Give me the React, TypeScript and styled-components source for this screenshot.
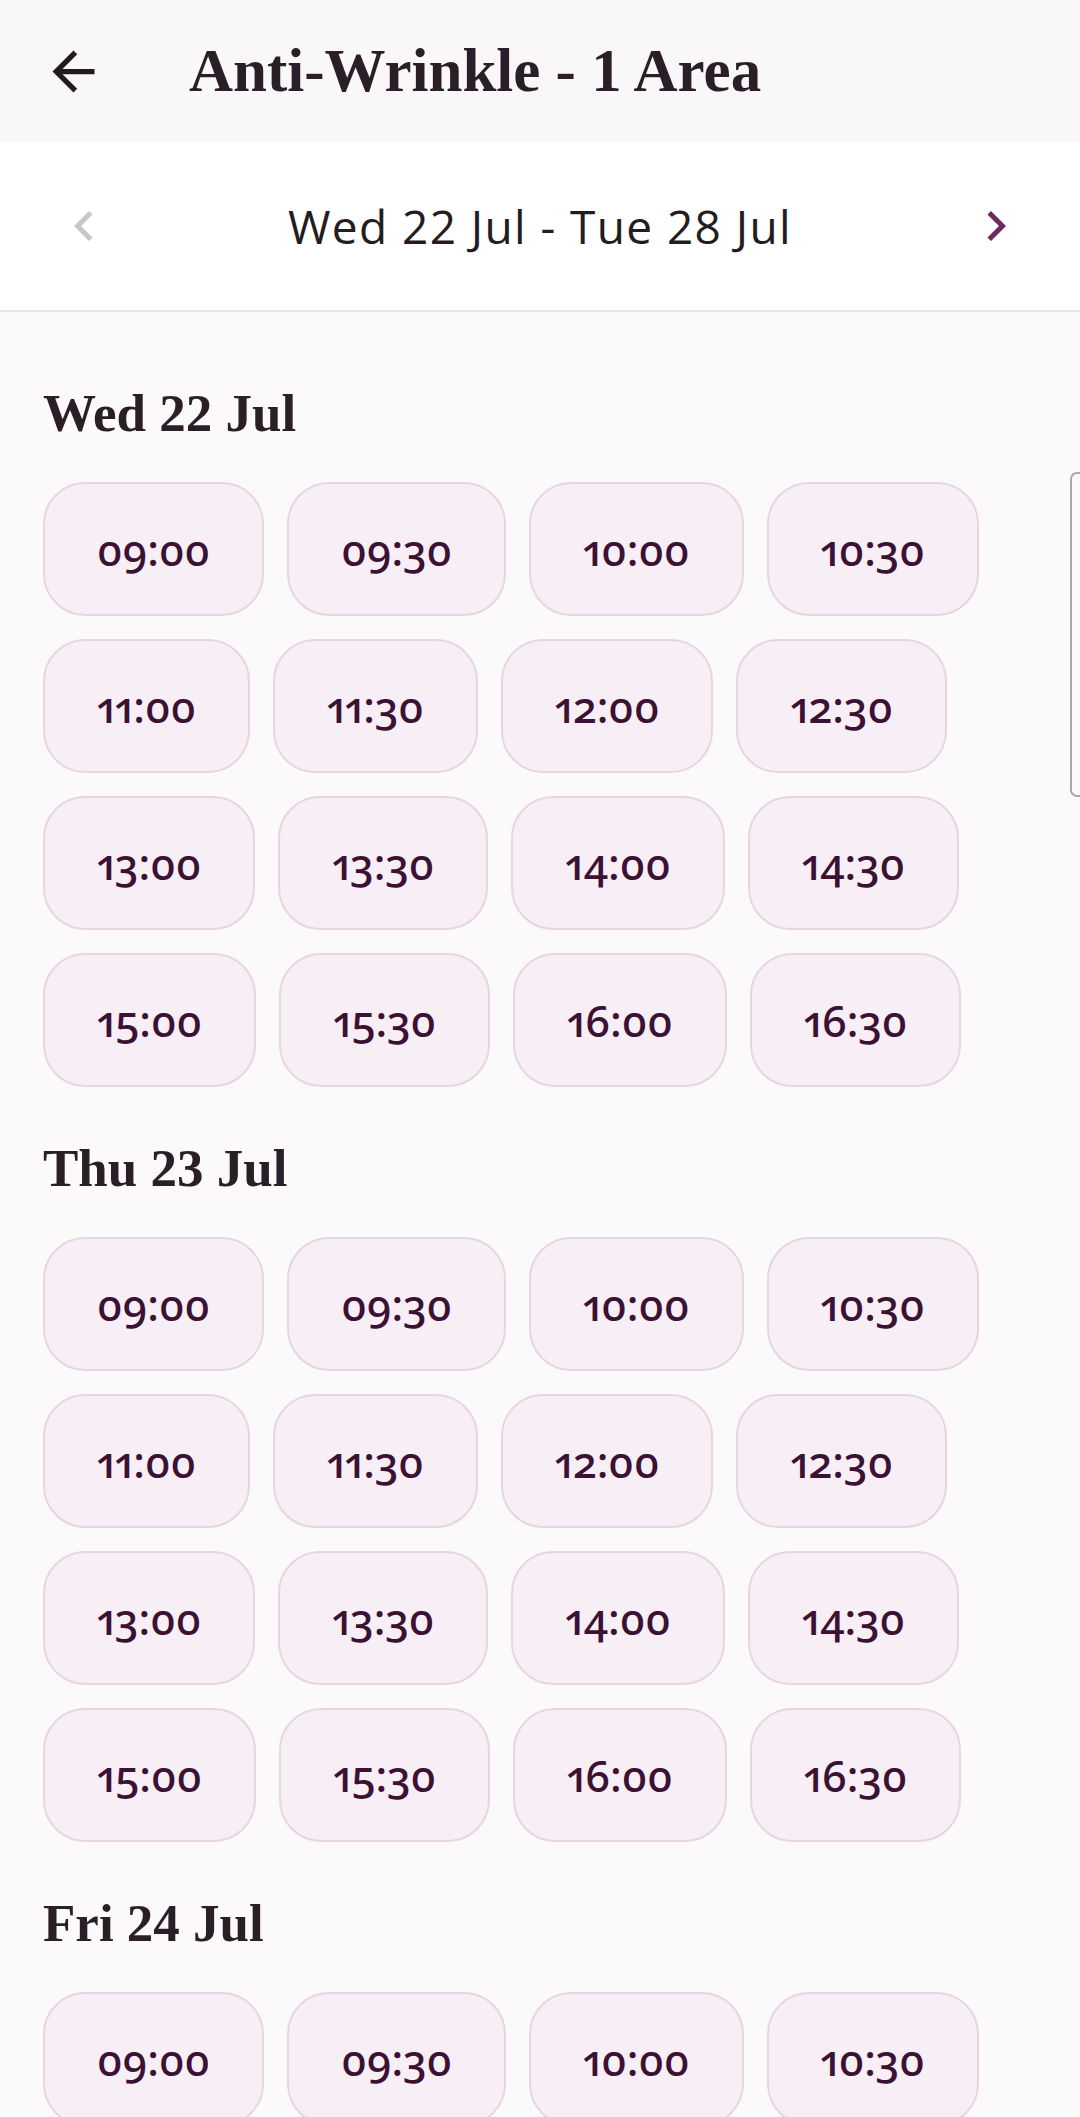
import React from "react";
import styled, { createGlobalStyle } from "styled-components";

const GlobalStyle = createGlobalStyle`
  html, body { margin: 0; padding: 0; background: #fcf9fb; }
  #root { width: 1080px; }
  * { box-sizing: border-box; }
`;

const Page = styled.div`
  position: relative;
  width: 1080px;
  height: 2117px;
  background: #fcf9fb;
  overflow: hidden;
`;

const Header = styled.header`
  height: 142px;
  background: #faf7f9;
  display: flex;
  align-items: center;
`;

const BackButton = styled.button`
  width: 63px;
  height: 63px;
  margin-left: 42px;
  padding: 0;
  border: none;
  background: transparent;
  display: flex;
  align-items: center;
  justify-content: center;
  color: #231a20;
`;

const Title = styled.h1`
  margin: 0 0 0 84px;
  font-family: "Liberation Serif", serif;
  font-weight: 700;
  font-size: 61px;
  color: #2a1f26;
`;

const WeekNav = styled.nav`
  height: 170px;
  background: #ffffff;
  border-bottom: 2px solid #e9e4e7;
  display: flex;
  align-items: center;
  justify-content: space-between;
  padding: 0 54px;
`;

const NavArrow = styled.button<{ $active?: boolean }>`
  width: 60px;
  height: 60px;
  padding: 0;
  border: none;
  background: transparent;
  display: flex;
  align-items: center;
  justify-content: center;
  color: ${(p) => (p.$active ? "#6b2a5e" : "#c9c6c8")};
`;

const WeekLabel = styled.div`
  font-family: "Open Sans", sans-serif;
  font-weight: 500;
  font-size: 46px;
  letter-spacing: 1.4px;
  color: #241c21;
`;

const Content = styled.main`
  padding: 69px 43px 0;
`;

const Section = styled.section`
  margin-bottom: 49px;
`;

const DayHeading = styled.h2`
  margin: 0 0 36px;
  font-family: "Liberation Serif", serif;
  font-weight: 700;
  font-size: 53px;
  line-height: 65px;
  color: #2a1f26;
`;

const SlotGrid = styled.div`
  display: flex;
  flex-wrap: wrap;
  gap: 23px;
`;

const Slot = styled.button`
  height: 134px;
  padding: 0 52px;
  border: 2px solid #e6d6e1;
  border-radius: 42px;
  background: #f8eff6;
  color: #3b1233;
  font-family: "Noto Sans", sans-serif;
  font-weight: 500;
  font-size: 43px;
  font-feature-settings: "onum" 1, "pnum" 1;
  font-variant-numeric: oldstyle-nums proportional-nums;
`;

const ScrollThumb = styled.div`
  position: absolute;
  top: 472px;
  right: 0;
  width: 10px;
  height: 325px;
  border: 2px solid #a9a9a9;
  border-right: none;
  border-radius: 7px 0 0 7px;
`;

const times = [
  "09:00", "09:30", "10:00", "10:30",
  "11:00", "11:30", "12:00", "12:30",
  "13:00", "13:30", "14:00", "14:30",
  "15:00", "15:30", "16:00", "16:30",
];

const days = ["Wed 22 Jul", "Thu 23 Jul", "Fri 24 Jul"];

const Chevron = ({ dir }: { dir: "left" | "right" }) => (
  <svg width="60" height="60" viewBox="0 0 24 24" fill="currentColor">
    {dir === "left" ? (
      <path d="M15.41 7.41L14 6l-6 6 6 6 1.41-1.41L10.83 12z" />
    ) : (
      <path d="M10 6L8.59 7.41 13.17 12l-4.58 4.59L10 18l6-6z" />
    )}
  </svg>
);

export default function App() {
  return (
    <Page>
      <GlobalStyle />
      <Header>
        <BackButton aria-label="Back">
          <svg width="63" height="63" viewBox="0 0 24 24" fill="currentColor">
            <path d="M20 11H7.83l5.59-5.59L12 4l-8 8 8 8 1.41-1.41L7.83 13H20v-2z" />
          </svg>
        </BackButton>
        <Title>Anti-Wrinkle - 1 Area</Title>
      </Header>
      <WeekNav>
        <NavArrow aria-label="Previous week">
          <Chevron dir="left" />
        </NavArrow>
        <WeekLabel>Wed 22 Jul - Tue 28 Jul</WeekLabel>
        <NavArrow $active aria-label="Next week">
          <Chevron dir="right" />
        </NavArrow>
      </WeekNav>
      <Content>
        {days.map((d) => (
          <Section key={d}>
            <DayHeading>{d}</DayHeading>
            <SlotGrid>
              {times.map((t) => (
                <Slot key={t}>{t}</Slot>
              ))}
            </SlotGrid>
          </Section>
        ))}
      </Content>
      <ScrollThumb />
    </Page>
  );
}
